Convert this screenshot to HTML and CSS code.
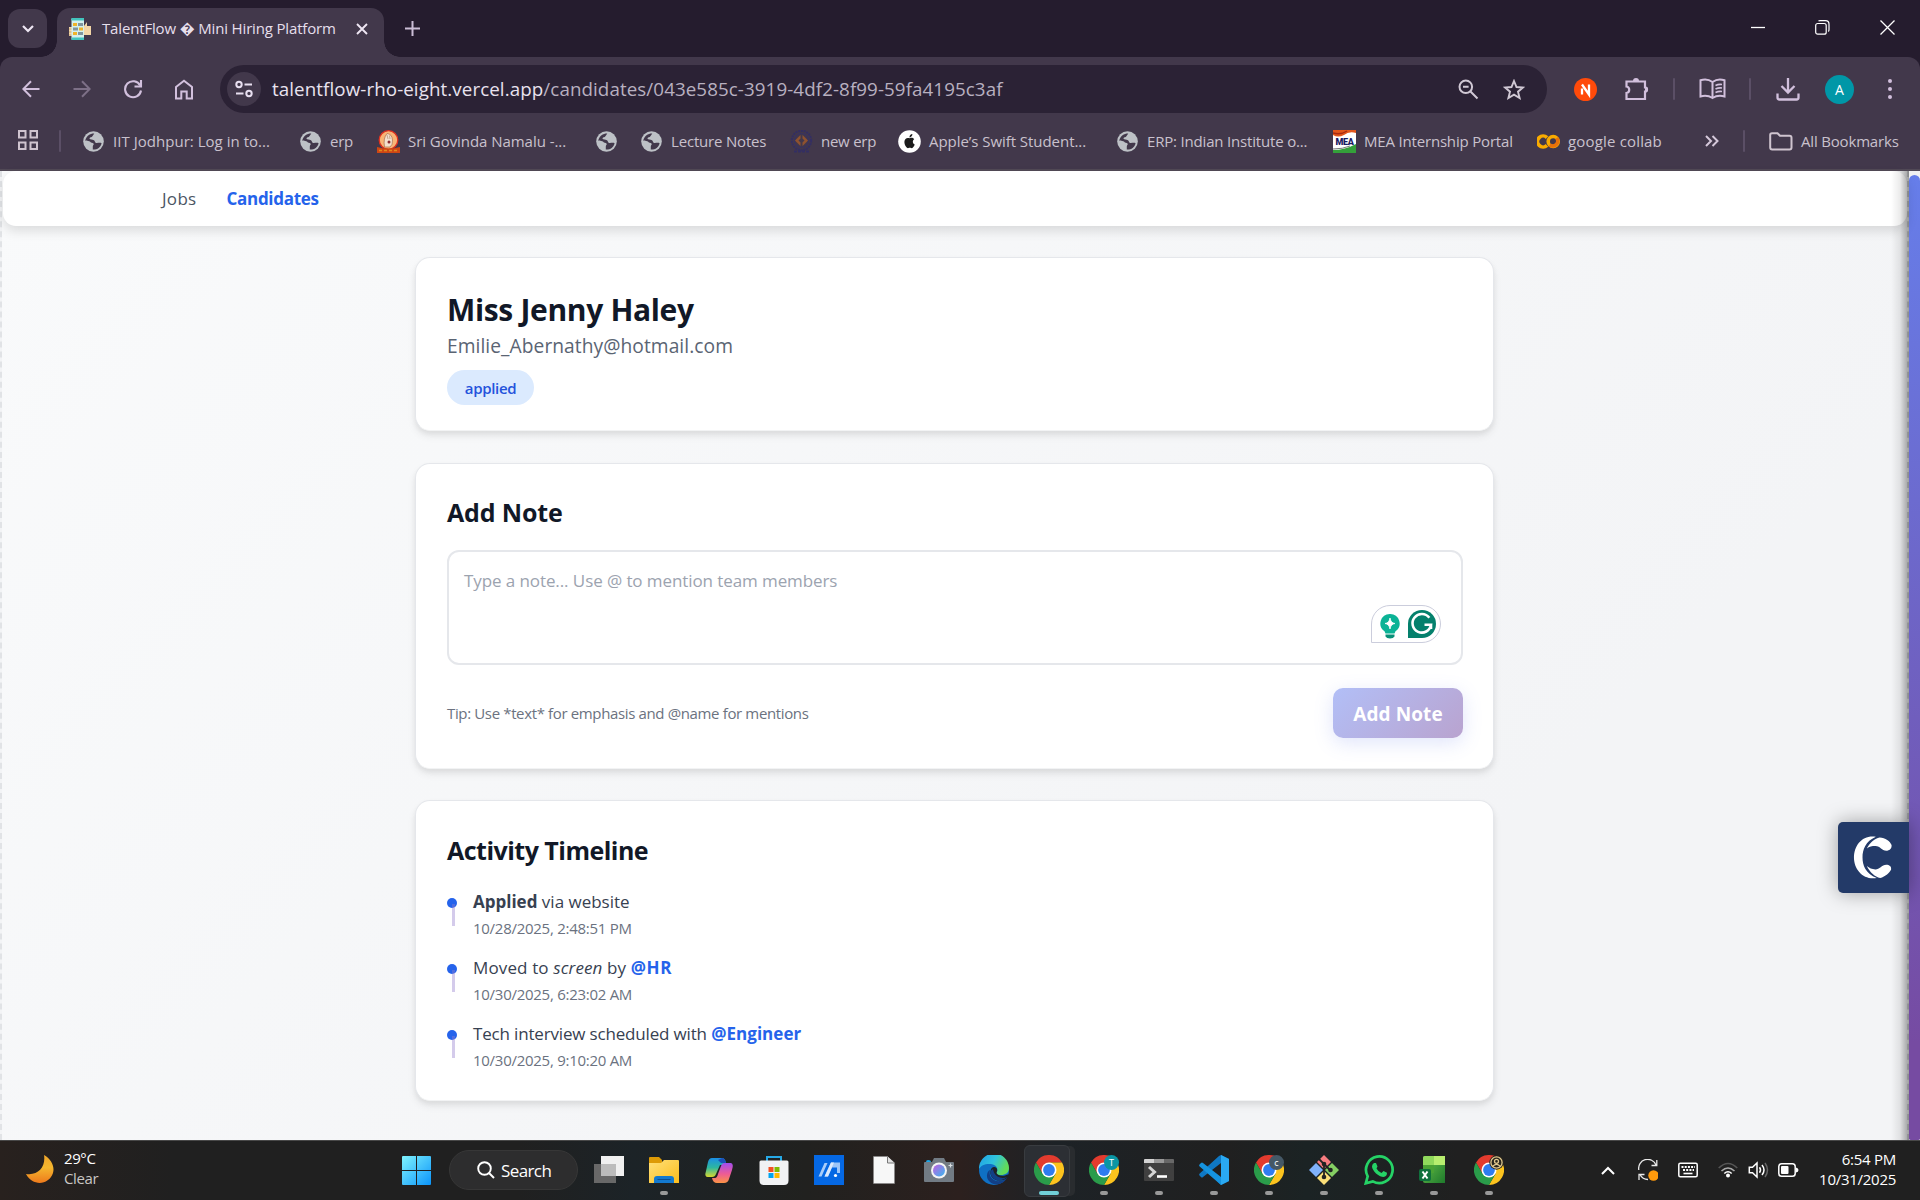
FILE: index.html
```html
<!DOCTYPE html>
<html lang="en">
<head>
<meta charset="utf-8">
<title>TalentFlow</title>
<link rel="stylesheet" href="styles.css">
</head>
<body>
<svg class="defs" width="0" height="0" aria-hidden="true">
  <defs>
    <symbol id="globe" viewBox="0 0 21 21">
      <circle cx="10.500" cy="10.500" r="10.300" fill="#bdc1c6"/>
      <path d="M2.200 9.600C3.500 4.800 7 2.400 11.300 2.500L9.400 5.300C8.700 6.500 7 6 6.500 7.200C6.300 8.600 9.400 8.200 11 9.200C12.300 10 11.500 11.600 13.200 12C14.600 12.300 17.200 11.300 18.600 12.300C17.500 16.600 14.400 18.800 9.800 18.600V15.500C9.800 14 11.400 13.700 10.500 12.600C9.700 11.600 8 12.100 7.200 10.800C6.200 9.600 4.400 10.500 2.200 9.600Z" fill="#42384b"/>
    </symbol>
    <symbol id="chrome" viewBox="0 0 30 30">
      <path d="M2 7.500A15 15 0 0 1 28 7.500H15L8.500 18.750Z" fill="#e33b2e"/>
      <path d="M15 7.500H28A15 15 0 0 1 15 30L21.500 18.750Z" fill="#fcc31e"/>
      <path d="M2 7.500A15 15 0 0 0 15 30L21.500 18.750H8.500Z" fill="#2a9c4a"/>
      <circle cx="15" cy="15" r="7.500" fill="#fff"/>
      <circle cx="15" cy="15" r="5.900" fill="#2f7cf0"/>
    </symbol>
    <linearGradient id="moon" x1="0" y1="0" x2="0" y2="1"><stop offset="0" stop-color="#f0a52a"/><stop offset=".45" stop-color="#f4b62e"/><stop offset="1" stop-color="#ee7a1c"/></linearGradient>
    <linearGradient id="win" gradientUnits="userSpaceOnUse" x1="0" y1="0" x2="29" y2="29"><stop offset="0" stop-color="#7ff3fd"/><stop offset="1" stop-color="#0b94fa"/></linearGradient>
    <linearGradient id="folder" x1="0" y1="0" x2="1" y2="1"><stop offset="0" stop-color="#ffe07a"/><stop offset="1" stop-color="#fcbd1c"/></linearGradient>
    <linearGradient id="copA" x1="0" y1="0" x2="0" y2="1"><stop offset="0" stop-color="#1b8fe6"/><stop offset=".5" stop-color="#2db7a0"/><stop offset="1" stop-color="#d8d82e"/></linearGradient>
    <linearGradient id="copB" x1="0" y1="0" x2="0" y2="1"><stop offset="0" stop-color="#a24cf0"/><stop offset=".55" stop-color="#ee5c94"/><stop offset="1" stop-color="#fb9345"/></linearGradient>
    <linearGradient id="lens" x1="0" y1="0" x2="1" y2="1"><stop offset="0" stop-color="#c45fe0"/><stop offset="1" stop-color="#37b8f0"/></linearGradient>
    <linearGradient id="edge" x1="0" y1="0" x2="1" y2=".4"><stop offset="0" stop-color="#1e9fe8"/><stop offset=".55" stop-color="#30c3dc"/><stop offset="1" stop-color="#62dc58"/></linearGradient>
    <linearGradient id="sheet" x1="0" y1="0" x2="1" y2="1"><stop offset="0" stop-color="#6cc24a"/><stop offset="1" stop-color="#1e7a2c"/></linearGradient>
  </defs>
</svg>

<div class="screen">
  <header class="browser">
    <div class="tabstrip">
      <button class="tab-search" aria-label="Search tabs"><svg width="14" height="10" viewBox="0 0 14 10"><path d="M2 2L7 7L12 2" fill="none" stroke="#eee6f3" stroke-width="2.200"/></svg></button>
      <div class="tab">
        <svg class="favicon" width="22" height="22" viewBox="0 0 22 22">
          <path d="M0 9H4V18H0ZM15 8L18 4V8H22V17H15Z" fill="#f3d6a6"/><path d="M0 11H4M0 14H4M0 17H4" stroke="#c9a878"/>
          <rect x="2.500" width="12.500" height="22" rx="1.300" fill="#d5f0ec"/><path d="M2.500 2.500V0H15V2.500ZM2.500 19.500V22H15V19.500Z" fill="#42c4bd"/>
          <path d="M4 5H8V8H4ZM10 9.500H14V12.500H10ZM4 14H8V17H4Z" fill="#f0b429"/><path d="M9 5H14V8H9ZM4 9.500H9V12.500H4ZM9 14H14V17H9Z" fill="#81969e"/>
        </svg>
        <span class="tab-title">TalentFlow � Mini Hiring Platform</span>
        <svg class="tab-close" width="12" height="12" viewBox="0 0 12 12"><path d="M1 1L11 11M11 1L1 11" stroke="#eee6f3" stroke-width="1.900"/></svg>
      </div>
      <svg class="new-tab" width="15" height="15" viewBox="0 0 15 15"><path d="M7.500 0V15M0 7.500H15" stroke="#cbbdd6" stroke-width="2"/></svg>
      <div class="window-controls">
        <svg width="14" height="15" viewBox="0 0 14 15"><path d="M0 7.500H14" stroke="#fff" stroke-width="1.300"/></svg>
        <svg width="15" height="15" viewBox="0 0 15 15" fill="none" stroke="#fff" stroke-width="1.200"><rect x=".7" y="3.500" width="10.500" height="10.700" rx="2"/><path d="M3.500 1.200Q4 .7 5 .7H10.500Q14 .7 14 4.200V9.500Q14 11 13.300 11.500"/></svg>
        <svg width="15" height="15" viewBox="0 0 15 15"><path d="M.5 .5L14.500 14.500M14.500 .5L.5 14.500" stroke="#fff" stroke-width="1.300"/></svg>
      </div>
    </div>

    <div class="toolbar">
      <div class="nav-buttons">
        <svg width="18" height="18" viewBox="0 0 18 18" fill="none" stroke="#d2c0dd" stroke-width="2"><path d="M17.500 9H1.500M9 1.200L1.300 9L9 16.800"/></svg>
        <svg width="18" height="18" viewBox="0 0 18 18" fill="none" stroke="#7d7087" stroke-width="2"><path d="M.5 9H16.500M9 1.200L16.700 9L9 16.800"/></svg>
        <svg width="20" height="20" viewBox="0 0 20 20" fill="none" stroke="#d2c0dd" stroke-width="2.100"><path d="M17.200 6.500A8 8 0 1 0 18 11.500"/><path d="M18 1V7.500H11.500"/></svg>
        <svg width="20" height="21" viewBox="0 0 20 21" fill="none" stroke="#d2c0dd" stroke-width="2"><path d="M2 8L10 1.800L18 8V19.500H12.700V12.500H7.300V19.500H2Z"/></svg>
      </div>
      <div class="omnibox">
        <div class="site-info"><svg width="18" height="18" viewBox="0 0 18 18" fill="none" stroke="#e8dff0" stroke-width="2"><circle cx="4" cy="4.500" r="2.700"/><path d="M9.500 4.500H17M1 13.500H8.500"/><circle cx="14" cy="13.500" r="2.700"/></svg></div>
        <div class="url"><span class="host">talentflow-rho-eight.vercel.app</span>/candidates/043e585c-3919-4df2-8f99-59fa4195c3af</div>
        <svg class="zoom-icon" width="21" height="21" viewBox="0 0 21 21" fill="none" stroke="#d0c8d4" stroke-width="2"><circle cx="7.800" cy="7.800" r="6.300"/><path d="M12.500 12.500L19.500 19.500M5 7.800H10.600"/></svg>
        <svg class="star-icon" width="22" height="21" viewBox="0 0 22 21"><path d="M11 2L13.500 8L20 8.500L15 12.700L16.600 19L11 15.600L5.400 19L7 12.700L2 8.500L8.500 8Z" fill="none" stroke="#d0c8d4" stroke-width="1.900"/></svg>
      </div>
      <div class="actions">
        <svg width="23" height="23" viewBox="0 0 23 23"><circle cx="11.500" cy="11.500" r="11.500" fill="#ff4a0a"/><path d="M8 16.500V10.500M8 6.500L15 16.500V6.500" fill="none" stroke="#fff" stroke-width="2.300"/></svg>
        <svg width="24" height="24" viewBox="0 0 24 24"><path d="M1.500 4.500H20V10.500A2 2 0 0 1 20 14.500V22H1.500V16A3.300 3.300 0 0 0 1.500 9.500Z" fill="none" stroke="#d2c0dd" stroke-width="2.200"/><path d="M8 4A3 3 0 0 1 14 4ZM20 9.500A3 3 0 0 1 20 15.500Z" fill="#d2c0dd"/></svg>
        <i class="divider"></i>
        <svg width="27" height="22" viewBox="0 0 27 22" fill="none" stroke="#d2c0dd" stroke-width="2"><path d="M13.500 4Q8 0 1.500 2.300V18.500Q8 16.500 13.500 20Q19 16.500 25.500 18.500V2.300Q19 0 13.500 4V20"/><path d="M16.500 7.500Q19.500 6 23 6.500M16.500 11Q19.500 9.500 23 10M16.500 14.500Q19.500 13 23 13.500" stroke-width="1.600"/></svg>
        <i class="divider"></i>
        <svg width="24" height="24" viewBox="0 0 24 24" fill="none" stroke="#d2c0dd" stroke-width="2.300"><path d="M12 1V15M5.500 9L12 15.500L18.500 9M1.500 16.500V20.500Q1.500 22.500 3.500 22.500H20.500Q22.500 22.500 22.500 20.500V16.500"/></svg>
        <span class="avatar">A</span>
        <svg width="4" height="20" viewBox="0 0 4 20" fill="#d2c0dd"><circle cx="2" cy="2" r="2"/><circle cx="2" cy="10" r="2"/><circle cx="2" cy="18" r="2"/></svg>
      </div>
    </div>

    <div class="bookmarks">
      <div class="apps"><svg width="20" height="20" viewBox="0 0 20 20" fill="none" stroke="#cfc4cf" stroke-width="2"><path d="M1 1H7.500V7.500H1ZM12.500 1H19V7.500H12.500ZM1 12.500H7.500V19H1ZM12.500 12.500H19V19H12.500Z"/></svg><i class="divider"></i></div>
      <div class="bm bm-iit"><svg width="23" height="21"><use href="#globe"/></svg><span>IIT Jodhpur: Log in to...</span></div>
      <div class="bm bm-tight"><svg width="23" height="21"><use href="#globe"/></svg><span>erp</span></div>
      <div class="bm"><svg width="23" height="23" viewBox="0 0 23 23"><circle cx="11.500" cy="10" r="9.300" fill="#f9b476" stroke="#e0301f" stroke-width="1.300"/><path d="M7.500 17Q6 8 10 3.500Q15 4 15.500 10Q16 15 13 17Z" fill="#f4e0cd" stroke="#a86f4a" stroke-width=".7"/><path d="M10 5L11 9M12.500 5.500L13 9" stroke="#b08a70" stroke-width=".7"/><circle cx="12" cy="12" r="1.500" fill="#8c2b32"/><path d="M0 17Q11 20 23 17V23H0Z" fill="#cf4614"/><path d="M2 20.500H21" stroke="#e08a1c" stroke-width="1.500" stroke-dasharray="3 2"/></svg><span>Sri Govinda Namalu -...</span></div>
      <div class="bm"><svg class="solo" width="21" height="21"><use href="#globe"/></svg></div>
      <div class="bm bm-mid"><svg width="23" height="21"><use href="#globe"/></svg><span>Lecture Notes</span></div>
      <div class="bm bm-tight"><svg width="23" height="23" viewBox="0 0 23 23" fill="none"><circle cx="11.500" cy="10.500" r="9.700" stroke="#332e63" stroke-width="2" stroke-dasharray="2 .8"/><circle cx="11.500" cy="10.500" r="7" stroke="#383262" stroke-width="1.200"/><path d="M10.500 5L5 10.500L10.500 16V12.500L8.500 10.500L10.500 8.500ZM12.500 5L18 10.500L12.500 16V12.500L14.500 10.500L12.500 8.500Z" fill="#8f522f"/><path d="M4 21.500H19" stroke="#332e63" stroke-width="2" stroke-dasharray="3 1"/></svg><span>new erp</span></div>
      <div class="bm"><svg width="23" height="23" viewBox="0 0 23 23"><circle cx="11.500" cy="11.500" r="11.300" fill="#fff"/><path d="M11.700 8.300C13 7.600 15 7.600 16.200 9.200C14.200 10.500 14.500 13.500 16.700 14.400C16 16.500 14.500 18.400 13.200 18.100C12.200 17.700 11.500 17.700 10.500 18.100C8.700 18.800 6.300 14.700 6.400 11.800C6.500 8.200 9.300 7.300 11.700 8.300ZM11.500 7.400C11.400 5.500 12.700 4.200 14.400 4C14.500 5.900 13.200 7.300 11.500 7.400Z" fill="#1b1b1b"/></svg><span>Apple’s Swift Student...</span></div>
      <div class="bm bm-mid"><svg width="23" height="21"><use href="#globe"/></svg><span>ERP: Indian Institute o...</span></div>
      <div class="bm bm-mid"><svg width="23" height="23" viewBox="0 0 23 23"><path d="M0 0H23V23H0Z" fill="#fff"/><path d="M0 0H23V3Q16 1 11 5Q5 8 0 5Z" fill="#e2571d"/><path d="M0 3Q8 5 14 1" stroke="#a82b12" stroke-width="1.500" fill="none"/><path d="M0 23V20Q12 20 23 14V23Z" fill="#34a03a"/><path d="M0 19Q10 19 17 16" stroke="#777" fill="none"/><text x="11.500" y="14.500" text-anchor="middle" class="mea">MEA</text></svg><span>MEA Internship Portal</span></div>
      <div class="bm bm-wide"><svg width="23" height="15" viewBox="0 0 23 15" fill="none" stroke-width="3.600"><path d="M10 3.600A5.500 5.500 0 1 0 10 11.400" stroke="#f9ab00"/><circle cx="16.200" cy="7.500" r="5" stroke="#f9ab00"/><path d="M12.700 11A5 5 0 0 0 19.700 4" stroke="#e8710a"/></svg><span>google collab</span></div>
      <svg class="more" width="14" height="12" viewBox="0 0 14 12" fill="none" stroke="#d5c8da" stroke-width="2"><path d="M1 1L6 6L1 11M7.500 1L12.500 6L7.500 11"/></svg>
      <i class="divider"></i>
      <div class="bm bm-mid"><svg width="24" height="19" viewBox="0 0 24 19"><path d="M1.200 3Q1.200 1.200 3 1.200H8.500L11 3.800H20.500Q22.500 3.800 22.500 5.800V15.500Q22.500 17.500 20.500 17.500H3.200Q1.200 17.500 1.200 15.500Z" fill="none" stroke="#cfc4cf" stroke-width="2"/></svg><span>All Bookmarks</span></div>
    </div>
  </header>

  <div class="viewport">
    <div class="page">
      <nav class="site-nav">
        <a class="nav-link">Jobs</a>
        <a class="nav-link current">Candidates</a>
      </nav>
      <main class="content">
        <section class="card profile">
          <h1>Miss Jenny Haley</h1>
          <p class="email">Emilie_Abernathy@hotmail.com</p>
          <span class="badge">applied</span>
        </section>

        <section class="card note">
          <h2>Add Note</h2>
          <div class="note-box">
            <span class="placeholder">Type a note... Use @ to mention team members</span>
            <div class="assistant">
              <svg width="20" height="33" viewBox="0 0 20 33"><path d="M10 0A9.500 9.500 0 0 1 15.500 17.300L14.500 19.500H5.500L4.500 17.300A9.500 9.500 0 0 1 10 0Z" fill="#0bb396"/><path d="M10 4Q10.800 9 15 9.500Q10.800 10 10 15Q9.200 10 5 9.500Q9.200 9 10 4Z" fill="#fff" stroke="#fff" stroke-width=".8"/><path d="M5.500 20.500H14.500V22.500Q13.500 24.500 10 24.500Q6.500 24.500 5.500 22.500Z" fill="#089078"/></svg>
              <svg width="28" height="28" viewBox="0 0 28 28"><path d="M0 28V14A14 14 0 1 1 14 28Z" fill="#04806c"/><path d="M21.300 7.800A9.300 9.300 0 1 0 23 14.800H16.500M23 14.500V19" fill="none" stroke="#fff" stroke-width="2.600"/></svg>
            </div>
          </div>
          <div class="note-actions">
            <span class="tip">Tip: Use *text* for emphasis and @name for mentions</span>
            <button class="submit">Add Note</button>
          </div>
        </section>

        <section class="card timeline">
          <h2>Activity Timeline</h2>
          <ul class="events">
            <li class="event"><p class="what"><strong>Applied</strong> via website</p><time>10/28/2025, 2:48:51 PM</time></li>
            <li class="event"><p class="what"><span class="moved">Moved to <em>screen</em> by</span> <b class="mention hr">@HR</b></p><time>10/30/2025, 6:23:02 AM</time></li>
            <li class="event"><p class="what"><span class="long">Tech interview scheduled with</span> <b class="mention">@Engineer</b></p><time>10/30/2025, 9:10:20 AM</time></li>
          </ul>
        </section>
      </main>
      <div class="side-widget"><svg width="42" height="46" viewBox="0 0 42 46"><path d="M24 1.200C10 -1 1 10 1 23C1 36 11 47 25 44.500C13 40 10 31 10 23C10 15 13 6 24 1.200Z" fill="#fff"/><path d="M14.500 13.500C18 7 23 3 28 2C34 2 39 6 40.500 10C41 14 38 16 35 16C30 16 29 11 23.500 11C20 11 17 11.500 14.500 13.500ZM14.500 32C18 39 23 43.500 28.500 44.500C34 43 38.500 39 40 35.500C40.500 32 38 30.500 35 30.500C30 30.500 28 35.500 23.500 35.500C20 35.500 17 34 14.500 32Z" fill="#fff"/></svg></div>
    </div>
    <div class="scrollbar"><div class="thumb"></div></div>
  </div>

  <footer class="taskbar">
    <div class="weather">
      <svg width="28" height="29" viewBox="0 0 28 29"><path d="M18 0C25 4 29 11 27 18C23 30 7 32 0 19C12 21 20 12 18 0Z" fill="url(#moon)"/></svg>
      <div class="weather-text"><span>29°C</span><span class="cond">Clear</span></div>
    </div>
    <svg class="start" width="29" height="29" viewBox="0 0 29 29"><path d="M1 0H14V14H0V1Q0 0 1 0ZM15 0H28Q29 0 29 1V14H15ZM0 15H14V29H1Q0 29 0 28ZM15 15H29V28Q29 29 28 29H15Z" fill="url(#win)"/></svg>
    <div class="search"><svg width="18" height="18" viewBox="0 0 18 18" fill="none" stroke="#fff" stroke-width="1.900"><circle cx="7.500" cy="7.500" r="6.300"/><path d="M12 12L17 17"/></svg><span>Search</span></div>
    <div class="apps-row">
      <div class="app"><svg width="30" height="30" viewBox="0 0 30 30"><path d="M0 9H22V28H0Z" fill="#686868"/><path d="M7 1H30V21H7Z" fill="#f0f0f0"/><path d="M7 9H22V21H7Z" fill="#bcbcbc"/></svg></div>
      <div class="app run"><svg width="30" height="30" viewBox="0 0 30 30"><path d="M0 3Q0 2 1 2H10L13 5V10H0Z" fill="#dd9a06"/><path d="M0 8H12L15 5H29Q30 5 30 6V28H0Z" fill="url(#folder)"/><path d="M5 28V24Q5 21 8 21H22Q25 21 25 24V28Z" fill="#1379cf"/><path d="M8.500 24.500H21.500" stroke="#0b4f94"/></svg></div>
      <div class="app"><svg width="30" height="30" viewBox="0 0 30 30"><path d="M8 3H18Q21 3 22 8L18 10H16L12 19Q11 22 8 22H4Q0 22 2 16L4 7Q5 3 8 3Z" fill="url(#copA)"/><path d="M18 3Q21 3 22 8H17L14 5Z" fill="#1b50b8"/><path d="M24 8H27Q30 9 28 15L25 24Q24 28 20 28H13Q9 28 8 23H11Q13 23 14 19L17 11Q18 8 21 8Z" fill="url(#copB)"/></svg></div>
      <div class="app"><svg width="30" height="30" viewBox="0 0 30 30"><path d="M8 8V2H22V8" fill="none" stroke="#26a9e6" stroke-width="2"/><path d="M.5 7Q.5 5.500 2 5.500H28Q29.500 5.500 29.500 7V25.500Q29.500 30 25 30H5Q.5 30 .5 25.500Z" fill="#f1f2f4"/><path d="M9.500 12H14.500V17H9.500Z" fill="#f25022"/><path d="M15.500 12H20.500V17H15.500Z" fill="#7fba00"/><path d="M9.500 18H14.500V23H9.500Z" fill="#00a4ef"/><path d="M15.500 18H20.500V23H15.500Z" fill="#ffb900"/></svg></div>
      <div class="app"><svg width="30" height="30" viewBox="0 0 30 30"><path d="M0 0H30V30H0Z" fill="#0568e4"/><path d="M4.500 21.500L10.500 8H13.500L7.500 21.500Z" fill="#a9cdf9"/><path d="M10.500 21.500L17 7.500H26V18H23V12.500H18L14 21.500Z" fill="#9cc5f8"/><path d="M10.500 21.500L17 7.500H20L14 21.500Z" fill="#dbe9fc"/><circle cx="21.500" cy="20.500" r="1.600" fill="#fff"/></svg></div>
      <div class="app"><svg width="22" height="30" viewBox="0 0 22 30"><path d="M.5 1.500H14.500L21.500 8V28.500H.5Z" fill="#f7f7f7" stroke="#888" stroke-width=".6"/><path d="M14.500 1.500V8H21.500" fill="#e2e2e2" stroke="#777"/></svg></div>
      <div class="app"><svg width="30" height="30" viewBox="0 0 30 30"><path d="M2 7Q2 5 4 5Q7 5 7 7Z" fill="#1ba5e8"/><path d="M0 8Q0 7 1 7H8L10 3H20L22 7H29Q30 7 30 8V26Q30 27 29 27H1Q0 27 0 26Z" fill="#727b84"/><circle cx="15" cy="15.500" r="8" fill="#f4f4f4"/><circle cx="15" cy="15.500" r="6" fill="url(#lens)"/><path d="M26.500 8.500V12.500M24.500 10.500H28.500" stroke="#d8dde0" stroke-width="1.200"/></svg></div>
      <div class="app"><svg width="30" height="30" viewBox="0 0 30 30"><circle cx="15" cy="15" r="15" fill="#0f70c4"/><path d="M0 14A15 15 0 0 1 30 13C30 18 26 20 22 20C19 20 17 19 17.500 17.500C19 16 19 11 14 9.500C8 8 2 10 0 14Z" fill="url(#edge)"/><path d="M11 15C9 22 15 27 21 26Q25 26 28 23C24 30 15 31 11 27C6 23 8 16 11 15Z" fill="#123f86"/><path d="M11.500 16C12 12.500 15 11 17.500 13C19 15 17.500 17 17.500 18C18 20.500 24 22 28.500 19.500L31 20L28 23Q26 25 21 25.500C14 26 10.500 20 11.500 16Z" fill="#1e2326"/><path d="M11.500 16C11 22 16 26 21 25.500Q25 25 28 22Q23 24 18.500 21.500Q14.500 19 14 14Z" fill="#123f86"/></svg></div>
      <div class="app focused"><svg width="30" height="30"><use href="#chrome"/></svg></div>
      <div class="app run"><svg width="30" height="30"><use href="#chrome"/><circle cx="22.500" cy="7.500" r="7.500" fill="#0a96a4"/><text x="22.500" y="11" text-anchor="middle" class="mini">T</text></svg></div>
      <div class="app run"><svg width="30" height="30" viewBox="0 0 30 30"><path d="M0 7H30V25Q30 26 29 26H1Q0 26 0 25Z" fill="#404040"/><path d="M0 8V5Q0 4 1 4H10V8Z" fill="#d3d3d3"/><path d="M10 4H20V8H10Z" fill="#999"/><path d="M20 4H29Q30 4 30 5V8H20Z" fill="#686868"/><path d="M5 12L10.500 17L5 22" fill="none" stroke="#d5d5d5" stroke-width="3"/><path d="M13 21.500H23" stroke="#fff" stroke-width="2.600"/></svg></div>
      <div class="app run"><svg width="30" height="30" viewBox="0 0 30 30"><path d="M22 0L30 4V26L22 30L18 26L22 22V8L4 22Q3 23 2 22L.5 20.500Q-.3 19.500 .7 18.500L20 1Z" fill="#0f78c4"/><path d="M2 8Q3 7 4 8L22 22V30L.7 11.500Q-.3 10.500 .5 9.500Z" fill="#1593df"/><path d="M22 0L30 4V26L22 30Z" fill="#2aa9f2"/></svg></div>
      <div class="app run"><svg width="30" height="30"><use href="#chrome"/><circle cx="22.500" cy="7.500" r="7.500" fill="#455866"/><text x="22.500" y="11" text-anchor="middle" class="mini">c</text></svg></div>
      <div class="app run"><svg width="30" height="30" viewBox="0 0 30 30"><path d="M15 0L22 7L15 14L8 7Z" fill="#f77c80"/><path d="M23 8L30 15L23 22L16 15Z" fill="#85cf63"/><path d="M15 16L22 23L15 30L8 23Z" fill="#fbdf78"/><path d="M7 8L14 15L7 22L0 15Z" fill="#80b2fb"/><path d="M10 4L15 9V23M15 9L21 15" fill="none" stroke="#222" stroke-width="1.800"/><circle cx="15" cy="9" r="2.300" fill="#222"/><circle cx="21.500" cy="15" r="2.300" fill="#222"/><circle cx="15" cy="22" r="2.300" fill="#222"/></svg></div>
      <div class="app run"><svg width="30" height="30" viewBox="0 0 30 30"><path d="M1.800 28.300L3.700 21.300A13.300 13.300 0 1 1 8.800 26.400Z" fill="none" stroke="#25d366" stroke-width="2.700"/><path d="M10 8H12L13.500 11.500L12.500 13.500Q14 16.500 17.500 18L19.500 16L23 17.700Q23 21.500 19.500 22Q16.500 22 12 18.500Q8 14 8 11.500Q8 9 10 8Z" fill="#25d366"/></svg></div>
      <div class="app run"><svg width="30" height="30" viewBox="0 0 30 30"><path d="M4 3Q4 1 6 1H26V28H6Q4 28 4 26Z" fill="url(#sheet)"/><path d="M4 3Q4 1 6 1H15V10H4Z" fill="#90d95c"/><path d="M15 1H26V10H15Z" fill="#b8ee6f"/><path d="M4 10H15V18H4Z" fill="#4aa234"/><rect x="0" y="14" width="12" height="12" rx="2" fill="#10703c"/><path d="M3.500 16.500L8.500 23.500M8.500 16.500L3.500 23.500" stroke="#fff" stroke-width="2"/></svg></div>
      <div class="app run"><svg width="30" height="30"><use href="#chrome"/><circle cx="22.500" cy="7.500" r="7.200" fill="#28251c"/><g fill="none" stroke="#e0c88e" stroke-width="1.300"><circle cx="22.500" cy="7.500" r="5.600"/><circle cx="22.500" cy="6.300" r="2"/><path d="M18.800 11.200Q22.500 7.500 26.200 11.200"/></g></svg></div>
    </div>
    <div class="tray">
      <svg width="14" height="9" viewBox="0 0 14 9"><path d="M1 8L7 2L13 8" fill="none" stroke="#fff" stroke-width="2"/></svg>
      <svg width="20" height="22" viewBox="0 0 20 22" fill="none" stroke="#e8e8e8" stroke-width="1.300"><path d="M.8 11A9 9 0 0 1 18 6M18.800 1V6.500H13.500M1 21V15.500H6.500M2 15.500A9 9 0 0 0 10 20.500"/><circle cx="15.500" cy="16.500" r="5.200" fill="#ff9a0c" stroke="none"/></svg>
      <svg width="20" height="16" viewBox="0 0 20 16" fill="none" stroke="#fff"><rect x=".8" y="1.300" width="18.400" height="13.400" rx="1.500" stroke-width="1.500"/><path d="M3.500 5H17M5 8H16" stroke-width="2" stroke-dasharray="2 1.200"/><path d="M5.500 11.500H14.500" stroke-width="1.600"/></svg>
      <svg width="20" height="16" viewBox="0 0 20 16" fill="none" stroke-width="1.600"><path d="M.7 6Q10 -3 19.300 6" stroke="#555"/><path d="M3.500 9Q10 3 16.500 9" stroke="#aaa"/><path d="M6.300 11.500Q10 8 13.700 11.500" stroke="#fff"/><circle cx="10" cy="13.500" r="2" fill="#fff"/></svg>
      <svg width="21" height="18" viewBox="0 0 21 18" fill="none" stroke="#fff" stroke-width="1.500"><path d="M1.300 6.300H4.500L9 2V16L4.500 11.700H1.300Z"/><path d="M11.500 6.300Q13.500 9 11.500 11.700M14 4Q18 9 14 14"/><path d="M17 2Q22 9 17 16" stroke="#666"/></svg>
      <svg width="21" height="14" viewBox="0 0 21 14"><rect x=".8" y=".8" width="16.400" height="12.400" rx="2.800" fill="none" stroke="#fff" stroke-width="1.500"/><rect x="3" y="3" width="7.500" height="8" rx="1" fill="#fff"/><path d="M18 4.500Q20.500 5 20.500 7Q20.500 9 18 9.500Z" fill="#fff"/></svg>
      <div class="clock"><span>6:54 PM</span><span>10/31/2025</span></div>
    </div>
  </footer>
</div>
</body>
</html>
```
FILE: styles.css
```css
* { box-sizing: border-box; }
body, h1, h2, p, ul { margin: 0; padding: 0; }
body { font-family: "Open Sans", "Noto Sans", "DejaVu Sans", sans-serif; overflow: hidden; }
svg { display: block; flex: none; }
button { border: 0; padding: 0; font: inherit; }
.defs { position: absolute; }
.screen { width: 1920px; height: 1200px; display: flex; flex-direction: column; }

/* Browser chrome */
.browser { height: 171px; background: #251c2e; flex: none; }
.tabstrip { height: 57px; display: flex; align-items: flex-start; }
.tab-search { width: 39px; height: 39px; margin: 9px 0 0 8px; border-radius: 12px; background: #42384b; display: flex; align-items: center; justify-content: center; }
.tab { position: relative; width: 327px; height: 49px; margin: 8px 0 0 10px; padding: 0 15px 8px 12px; border-radius: 13px 13px 0 0; background: #42384b; display: flex; align-items: center; }
.tab::before, .tab::after { content: ""; position: absolute; bottom: 0; width: 16px; height: 16px; }
.tab::before { left: -16px; background: radial-gradient(circle at 0 0, transparent 15.500px, #42384b 16px); }
.tab::after { right: -16px; background: radial-gradient(circle at 100% 0, transparent 15.500px, #42384b 16px); }
.tab-title { margin-left: 11px; width: 254px; padding-bottom: 2px; font-size: 15px; letter-spacing: -.16px; color: #e6dfeb; white-space: nowrap; }
.new-tab { margin: 21px 0 0 21px; }
.window-controls { margin: 20px 25px 0 auto; display: flex; gap: 50px; }

.toolbar { height: 64px; background: #42384b; border-radius: 12px 12px 0 0; display: flex; align-items: center; }
.nav-buttons { display: grid; grid-template-columns: repeat(4, 51px); margin-left: 5px; justify-items: center; align-items: center; }
.omnibox { width: 1327px; height: 48px; margin-left: 11px; border-radius: 24px; background: #2b2235; display: flex; align-items: center; padding: 0 22px 0 7px; }
.site-info { width: 34px; height: 34px; border-radius: 17px; background: #42384b; display: flex; align-items: center; justify-content: center; }
.url { flex: 1; margin-left: 11px; padding-bottom: 2px; font-size: 18.750px; letter-spacing: .09px; color: #b8b0c0; white-space: nowrap; }
.host { color: #e9e2ef; }
.star-icon { margin-left: 24px; }
.actions { display: grid; grid-template-columns: 52px 52px 22px 54px 22px 54px 49px 52px; margin-left: 12px; justify-items: center; align-items: center; }
.divider { width: 2px; height: 22px; background: #5b4f66; border-radius: 1px; }
.avatar { width: 29px; height: 29px; border-radius: 50%; background: #0097a7; color: #fff; font-size: 14px; line-height: 29px; text-align: center; }

.bookmarks { height: 50px; padding-bottom: 8px; background: #42384b; border-bottom: 2px solid #514956; display: grid; grid-template-columns: 82px 217px 78px 219px 44px 150px 108px 218px 217px 204px 168px 38px 26px 150px; align-items: center; font-size: 15px; color: #c9c1cd; }
.apps { display: flex; padding-left: 18px; gap: 21px; }
.bm { display: flex; align-items: center; gap: 8px; white-space: nowrap; letter-spacing: -.05px; }
.bm-iit { letter-spacing: .03px; }
.bm-tight { letter-spacing: -.25px; }
.bm-mid { letter-spacing: -.18px; }
.bm-wide { letter-spacing: .17px; }
.mea { font: 900 9px "Roboto", sans-serif; fill: #1a1a62; letter-spacing: -.3px; }

/* Web page */
.viewport { height: 969px; display: flex; flex: none; }
.page { position: relative; width: 1909px; background: linear-gradient(135deg, #f9fafb, #f3f4f6 75%); border-left: 2px dashed #e1e3e6; border-right: 2px dashed #d5d7da; }
.page::after { content: ""; position: absolute; top: 0; bottom: 0; right: -2px; width: 18px; background: linear-gradient(90deg, transparent, rgba(0, 0, 0, .08) 50%, rgba(0, 0, 0, .36)); }
.site-nav { height: 55px; margin: 0 0 31px 1px; padding-left: 159px; background: #fff; border-radius: 13px; box-shadow: 0 5px 12px rgba(0, 0, 0, .12); display: flex; align-items: center; gap: 30px; font-size: 17px; color: #4b5563; }
.nav-link { letter-spacing: .3px; }
.nav-link.current { font-weight: 700; letter-spacing: -.29px; color: #2563eb; }
.content { width: 1079px; margin-left: 413px; display: flex; flex-direction: column; gap: 31px; }
.card { background: #fff; border: 1px solid #e5e7eb; border-bottom-color: #f2f3f4; border-radius: 15px; padding: 31px 30px 30px 31px; box-shadow: 0 5px 8px rgba(0, 0, 0, .07), 0 3px 5px rgba(0, 0, 0, .05); }
.profile { height: 174px; margin-bottom: 1px; }
h1 { font-size: 30px; line-height: 41px; letter-spacing: -.33px; color: #111827; }
h2 { font-size: 25px; line-height: 34px; letter-spacing: -.16px; color: #111827; }
.email { font-size: 19.200px; line-height: 32px; letter-spacing: .06px; color: #5a6473; }
.badge { display: inline-block; margin-top: 8px; width: 87px; height: 35px; border-radius: 18px; background: #dbeafe; color: #2453dc; font-size: 15px; font-weight: 600; letter-spacing: -.32px; line-height: 36px; text-align: center; }
.note { height: 306px; }
.note-box { position: relative; height: 115px; margin-top: 21px; padding: 15px; border: 2px solid #e5e7eb; border-radius: 12px; font-size: 17px; line-height: 27px; color: #9ca3af; }
.placeholder { letter-spacing: -.09px; }
.assistant { position: absolute; right: 20px; bottom: 20px; width: 70px; height: 38px; padding: 4px 4px 0 8px; border: 1px solid #cbcddc; border-radius: 20px 20px 20px 0; background: #fff; display: flex; gap: 8px; }
.assistant svg:first-child { margin-top: 4px; }
.note-actions { display: flex; justify-content: space-between; align-items: center; margin-top: 23px; }
.tip { font-size: 15px; letter-spacing: -.36px; color: #6b7280; }
.submit { width: 130px; height: 50px; padding-top: 1px; border-radius: 10px; background: linear-gradient(135deg, #b2bff7, #b9a3cf); box-shadow: 0 5px 19px rgba(102, 126, 234, .2); color: #fff; font-size: 19px; font-weight: 700; letter-spacing: .09px; }
.timeline { height: 301px; padding-top: 32px; }
.timeline h2 { letter-spacing: -.52px; }
.events { list-style: none; margin-top: 20px; display: flex; flex-direction: column; gap: 14px; }
.event { position: relative; height: 52px; padding-left: 26px; }
.event::before { content: ""; position: absolute; left: 0; top: 11px; width: 10px; height: 10px; border-radius: 50%; background: #2563eb; }
.event::after { content: ""; position: absolute; left: 5px; top: 17px; width: 3px; height: 22px; background: rgba(148, 124, 205, .4); }
.what { font-size: 17px; line-height: 29px; color: #374151; white-space: nowrap; letter-spacing: 0; }
.long { letter-spacing: -.17px; }
.moved { letter-spacing: .13px; }
.mention { color: #2563eb; letter-spacing: .03px; }
.hr { letter-spacing: .7px; }
time { display: block; font-size: 15px; line-height: 24px; letter-spacing: -.27px; color: #6b7280; }
.side-widget { position: absolute; right: -2px; top: 651px; width: 71px; height: 71px; border-radius: 5px 0 0 5px; background: #233a68; box-shadow: 0 0 20px rgba(0, 0, 0, .35); display: flex; align-items: center; padding-left: 15px; z-index: 1; }
.side-widget svg { width: 40px; height: 45px; }
.scrollbar { width: 11px; padding-top: 4px; background: #f1f1f1; }
.thumb { height: 965px; border-radius: 6px 6px 2px 2px; background: linear-gradient(#667eea, #764ba2 90%); }

/* Taskbar */
.taskbar { height: 60px; border-top: 1px solid #484848; background: linear-gradient(90deg, #28211e, #202020 9%, #202020 27%, #1c2327 33%, #21211f 42%, #2c201e 50%, #1d2226 55%, #202020 64%, #1b2324 68%, #202020 76%); color: #fff; display: flex; align-items: flex-start; font-size: 15px; }
.weather { display: flex; width: 402px; padding: 7px 0 0 26px; gap: 10px; }
.weather svg { margin-top: 7px; }
.weather-text { display: flex; flex-direction: column; line-height: 20px; letter-spacing: -.4px; }
.cond { color: #c9c6c4; }
.start { margin-top: 15px; }
.search { width: 129px; height: 40px; margin: 9px 0 0 18px; border-radius: 20px; background: #2d2d2e; border: 1px solid #373737; display: flex; align-items: center; padding-left: 27px; gap: 6px; font-size: 17px; letter-spacing: -.6px; }
.apps-row { display: grid; grid-template-columns: repeat(17, 55px); margin-left: 3px; }
.app { position: relative; height: 59px; padding-bottom: 1px; display: flex; align-items: center; justify-content: center; }
.app svg { position: relative; }
.run::after, .focused::after { content: ""; position: absolute; bottom: 5px; left: 23.500px; width: 8px; height: 4px; border-radius: 2px; background: #999; }
.focused::after { width: 20px; left: 17.500px; background: #71d0d9; }
.focused::before { content: ""; position: absolute; left: 2.500px; top: 4px; width: 44px; height: 50px; border: 1px solid #393c40; border-radius: 6px; background: #2c2f34; box-shadow: 6px 0 0 -1px #292c2f; }
.mini { font: 8px "DejaVu Sans", sans-serif; fill: #fff; }
.tray { margin-left: auto; height: 59px; display: flex; align-items: flex-start; padding-right: 24px; }
.tray svg { align-self: center; margin-bottom: 1px; }
.tray svg:nth-child(2) { margin-left: 23px; }
.tray svg:nth-child(3) { margin-left: 20px; }
.tray svg:nth-child(4) { margin-left: 20px; }
.tray svg:nth-child(5) { margin-left: 10px; }
.tray svg:nth-child(6) { margin-left: 9px; }
.clock { width: 97px; padding-top: 8px; display: flex; flex-direction: column; align-items: flex-end; line-height: 20px; letter-spacing: -.27px; }
```
